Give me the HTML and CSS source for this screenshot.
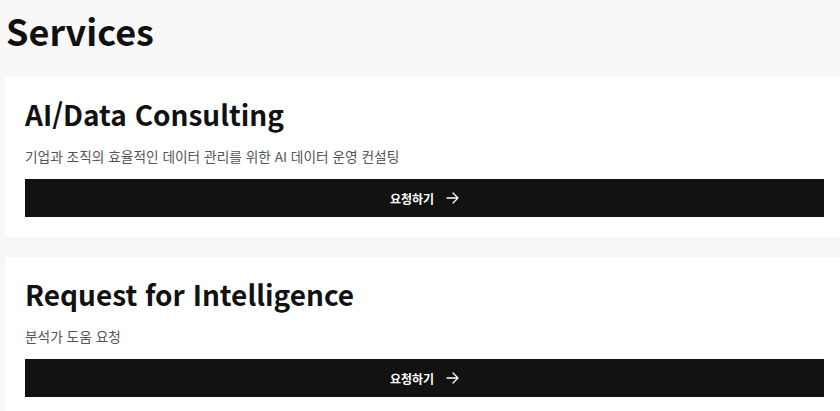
FILE: index.html
```html
<!DOCTYPE html>
<html lang="ko">
<head>
<meta charset="utf-8">
<link rel="stylesheet" href="styles.css">
</head>
<body>
<main class="page">
  <h1 class="page-title">Services</h1>
  <section class="card">
    <h2 class="card-title">AI/Data Consulting</h2>
    <p class="card-desc">기업과 조직의 효율적인 데이터 관리를 위한 AI 데이터 운영 컨설팅</p>
    <button class="cta" type="button"><span>요청하기</span>
      <svg class="arrow" width="13" height="12" viewBox="0 0 13 12" fill="none" stroke="currentColor" stroke-width="1.3" stroke-linecap="round" stroke-linejoin="round"><path d="M1 6h11M7 1l5 5-5 5"/></svg>
    </button>
  </section>
  <section class="card">
    <h2 class="card-title">Request for Intelligence</h2>
    <p class="card-desc">분석가 도움 요청</p>
    <button class="cta" type="button"><span>요청하기</span>
      <svg class="arrow" width="13" height="12" viewBox="0 0 13 12" fill="none" stroke="currentColor" stroke-width="1.3" stroke-linecap="round" stroke-linejoin="round"><path d="M1 6h11M7 1l5 5-5 5"/></svg>
    </button>
  </section>
</main>
</body>
</html>
```

FILE: styles.css
```css
html, body {
  margin: 0;
  padding: 0;
  background: #f8f8f8;
  font-family: "Noto Sans CJK KR", "Noto Sans", sans-serif;
  color: #111;
  overflow: hidden;
}
.page {
  padding: 0 0 0 5px;
  width: 839px;
  display: flex;
  flex-direction: column;
  gap: 20px;
}
.page-title {
  margin: 0 0 -3px 1px;
  font-size: 36px;
  font-weight: 700;
  line-height: 60px;
  color: #111;
}
.card {
  background: #fff;
  padding: 15px 20px 20px;
  display: flex;
  flex-direction: column;
}
.card-title {
  margin: 0;
  font-size: 28px;
  font-weight: 700;
  line-height: 44px;
  color: #111;
}
.card-desc {
  margin: 10px 0 0;
  font-size: 13.7px;
  line-height: 20px;
  color: #555;
}
.cta {
  margin-top: 13px;
  height: 38px;
  border: 0;
  background: #121212;
  color: #fff;
  font-family: inherit;
  font-size: 12px;
  font-weight: 700;
  display: flex;
  align-items: center;
  justify-content: center;
  gap: 12px;
  padding: 0;
}
.arrow {
  display: block;
}
```
